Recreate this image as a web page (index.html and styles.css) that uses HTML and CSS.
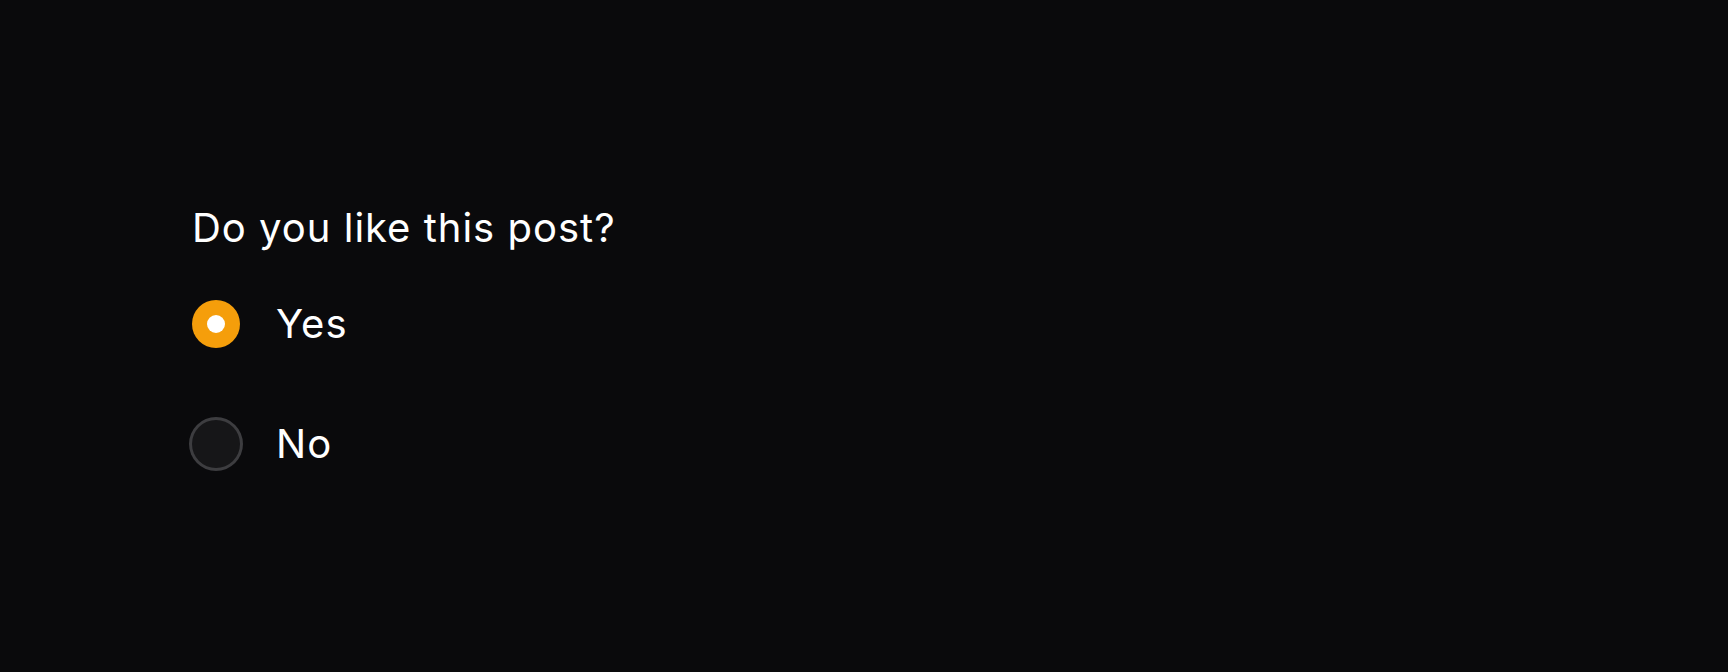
FILE: index.html
```html
<!DOCTYPE html>
<html lang="en">
<head>
<meta charset="utf-8">
<title>Poll</title>
<link rel="stylesheet" href="styles.css">
</head>
<body>
<main class="page">
  <fieldset class="poll">
    <legend class="question">Do you like this post?</legend>
    <div class="options">
      <label class="option">
        <span class="radio radio-checked"><span class="dot"></span></span>
        <span class="label">Yes</span>
      </label>
      <label class="option">
        <span class="radio radio-empty"></span>
        <span class="label">No</span>
      </label>
    </div>
  </fieldset>
</main>
</body>
</html>
```

FILE: styles.css
```css
html, body {
  margin: 0;
  padding: 0;
  background: #0a0a0c;
  height: 100%;
}
body {
  font-family: Inter, "Noto Sans", sans-serif;
  color: #ffffff;
  letter-spacing: 1px;
}
.page {
  padding: 204px 0 0 192px;
}
.poll {
  border: 0;
  margin: 0;
  padding: 0;
}
.question {
  padding: 0;
  font-size: 40px;
  line-height: 48px;
  font-weight: 400;
  margin: 0 0 48px 0;
  float: left;
  width: 100%;
}
.options {
  clear: both;
  display: flex;
  flex-direction: column;
  gap: 72px;
}
.option {
  display: flex;
  align-items: center;
  gap: 36px;
  height: 48px;
}
.radio {
  width: 48px;
  height: 48px;
  border-radius: 50%;
  display: flex;
  align-items: center;
  justify-content: center;
  flex: none;
}
.radio-checked {
  background: #f59e0b;
}
.dot {
  width: 18px;
  height: 18px;
  border-radius: 50%;
  background: #ffffff;
}
.radio-empty {
  background: #161618;
  box-shadow: 0 0 0 3px #3d3d40;
}
.label {
  font-size: 40px;
  line-height: 48px;
}
```
